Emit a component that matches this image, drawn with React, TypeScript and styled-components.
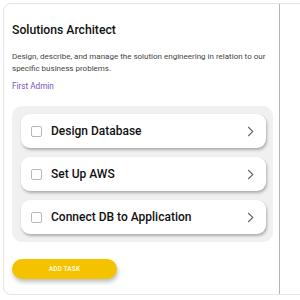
import React from 'react';
import styled, { createGlobalStyle } from 'styled-components';

const GlobalStyle = createGlobalStyle`
  html, body {
    margin: 0;
    padding: 0;
    background: #ffffff;
    font-family: Roboto, "Liberation Sans", sans-serif;
    overflow: hidden;
  }
`;

const Card = styled.div`
  margin: 3px 0 0 3px;
  width: 330px;
  height: 292px;
  box-sizing: border-box;
  border: 1px solid #e6e6e6;
  border-radius: 8px;
  display: flex;
  background: #fff;
`;

const MainColumn = styled.div`
  width: 276px;
  box-sizing: border-box;
  border-right: 1px solid #b5b5b5;
  padding: 17px 5px 0 8px;
`;

const Title = styled.h2`
  margin: 0;
  font-size: 12.2px;
  font-weight: 500;
  color: #111;
  line-height: 18px;
`;

const Description = styled.p`
  margin: 12px 0 0;
  max-width: 258px;
  font-size: 8px;
  line-height: 12px;
  color: #444;
`;

const Owner = styled.div`
  margin-top: 5px;
  font-size: 8.2px;
  line-height: 12px;
  color: #7b52c0;
`;

const TaskList = styled.div`
  margin-top: 14px;
  width: 261px;
  box-sizing: border-box;
  background: #f0f0f0;
  border-radius: 10px;
  padding: 8px 7px 8px 9px;
  display: flex;
  flex-direction: column;
  gap: 9px;
`;

const TaskItem = styled.div`
  height: 34px;
  background: #fff;
  border-radius: 9px;
  box-shadow: 1px 2px 3px rgba(0, 0, 0, 0.28);
  display: flex;
  align-items: center;
  padding: 0 12px 0 10px;
`;

const CheckBox = styled.span`
  width: 11px;
  height: 11px;
  box-sizing: border-box;
  border: 1px solid #b8b8b8;
  border-radius: 2px;
  flex-shrink: 0;
`;

const TaskName = styled.span`
  margin-left: 9px;
  font-size: 12px;
  font-weight: 500;
  color: #111;
  flex: 1;
`;

const Chevron = () => (
  <svg width="7" height="11" viewBox="0 0 7 11">
    <path d="M1.2 1 L5.8 5.5 L1.2 10" fill="none" stroke="#666" strokeWidth="1.1" />
  </svg>
);

const AddButton = styled.button`
  margin-top: 17px;
  width: 105px;
  height: 20px;
  border: none;
  border-radius: 10px;
  background: #f5c200;
  color: #fff6d6;
  font-family: Roboto, "Liberation Sans", sans-serif;
  font-size: 6.5px;
  font-weight: 700;
  letter-spacing: 0.1px;
  box-shadow: 1px 3px 4px rgba(0, 0, 0, 0.25);
  padding: 0;
`;

const tasks = ['Design Database', 'Set Up AWS', 'Connect DB to Application'];

const App = () => (
  <>
    <GlobalStyle />
    <Card>
      <MainColumn>
        <Title>Solutions Architect</Title>
        <Description>
          Design, describe, and manage the solution engineering in relation to our specific business problems.
        </Description>
        <Owner>First Admin</Owner>
        <TaskList>
          {tasks.map((t) => (
            <TaskItem key={t}>
              <CheckBox />
              <TaskName>{t}</TaskName>
              <Chevron />
            </TaskItem>
          ))}
        </TaskList>
        <AddButton>ADD TASK</AddButton>
      </MainColumn>
    </Card>
  </>
);

export default App;
